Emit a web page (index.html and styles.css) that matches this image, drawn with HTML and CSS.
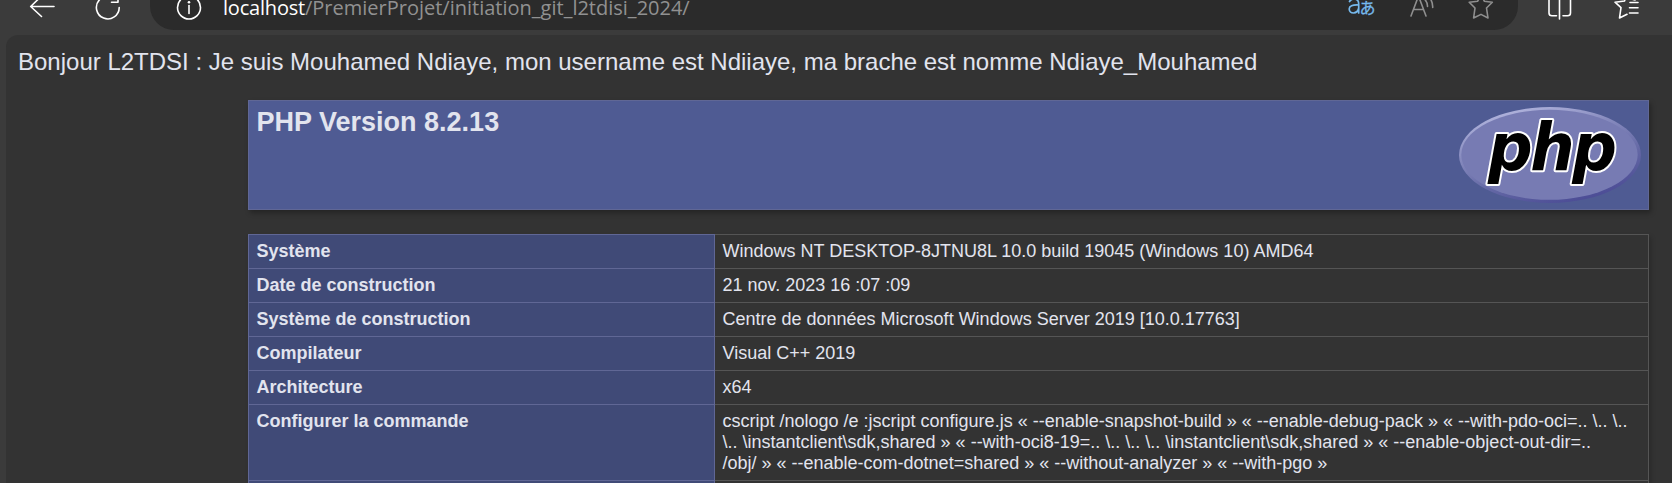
FILE: index.html
```
<!DOCTYPE html>
<html lang="fr">
<head>
<meta charset="utf-8">
<title>PHP 8.2.13 - phpinfo()</title>
<link rel="stylesheet" href="styles.css">
</head>
<body>
<header class="toolbar">
  <svg class="icon nav-icons" width="150" height="30" viewBox="0 0 150 30">
    <path d="M54 6.500H31M41.500-4L30.700 6.500L41.500 16.500"/>
    <path d="M119.200 7.500A11.400 11.400 0 1 1 99.500-0.300M118-7V2.300H111.500"/>
  </svg>
  <div class="address">
    <svg class="icon info" width="26" height="30" viewBox="0 0 26 30">
      <circle cx="13" cy="7.500" r="11.500"/>
      <path d="M13 5.500V13.500"/>
      <circle class="dot" cx="13" cy="2.300" r="1.300"/>
    </svg>
    <div class="url"><span class="host">localhost</span><span class="path">/PremierProjet/initiation_git_l2tdisi_2024/</span></div>
    <svg class="icon address-icons" width="170" height="30" viewBox="0 0 170 30">
      <g class="translate">
        <path d="M1.500 1.500Q3-1 6-1Q10.700-1 10.700 4V13M10.700 5Q1.200 4.500 1.200 9Q1.500 13 5.500 13Q10 12.500 10.700 8"/>
        <text class="kana" x="11.500" y="13.500">あ</text>
      </g>
      <g class="muted">
        <path d="M63 16L70.500-4L78 16M65.500 9.500H75.500"/>
        <path d="M76.500-1Q79.700 2.500 79.500 6.500M80.500-4Q85 1.500 84.700 7.500"/>
        <path d="M133-6L136.300 1.200L144.300 2.300L138.500 8L140 18L133 14.400L125.600 18L127 8L121.200 2.300L129.700 1.200Z"/>
      </g>
    </svg>
  </div>
  <svg class="icon side-icons" width="154" height="30" viewBox="0 0 154 30">
    <path d="M41-8H34Q31 -8 31-5V13Q31 15.800 34 15.800H38.500M44-8H49.500Q52.500-8 52.500-5V13Q52.500 15.800 49.500 15.800H45M41.500-10V19"/>
    <path d="M117 0L113.500-1L109.500-8L106.500 1L97 2.200L103 7.700L101.500 18L109 14.300M112 2.500H120M111.500 7.800H120M111.500 13H120" />
  </svg>
</header>
<main class="page">
  <p class="greeting">Bonjour L2TDSI : Je suis Mouhamed Ndiaye, mon username est Ndiiaye, ma brache est nomme Ndiaye_Mouhamed</p>
  <section class="banner">
    <h1>PHP Version 8.2.13</h1>
    <svg class="logo" width="182" height="96" viewBox="0 0 182 96" role="img" aria-label="PHP">
      <defs>
        <linearGradient id="rim" x1="0.25" y1="0" x2="0.75" y2="1">
          <stop offset="0" stop-color="#b4b7df"/>
          <stop offset="0.35" stop-color="#8589bd"/>
          <stop offset="0.65" stop-color="#6468a5"/>
          <stop offset="1" stop-color="#484893"/>
        </linearGradient>
      </defs>
      <ellipse cx="91" cy="48" rx="91" ry="48" fill="url(#rim)"/>
      <ellipse cx="90.500" cy="47.800" rx="88.200" ry="45" fill="#777bb3"/>
      <text class="wordmark" transform="translate(29 63) scale(0.96 1)">php</text>
    </svg>
  </section>
  <table class="info-table">
    <tr><th>Système</th><td>Windows NT DESKTOP-8JTNU8L 10.0 build 19045 (Windows 10) AMD64</td></tr>
    <tr><th>Date de construction</th><td>21 nov. 2023 16 :07 :09</td></tr>
    <tr><th>Système de construction</th><td>Centre de données Microsoft Windows Server 2019 [10.0.17763]</td></tr>
    <tr><th>Compilateur</th><td>Visual C++ 2019</td></tr>
    <tr><th>Architecture</th><td>x64</td></tr>
    <tr><th>Configurer la commande</th><td>cscript /nologo /e :jscript configure.js « --enable-snapshot-build » « --enable-debug-pack » « --with-pdo-oci=.. \.. \..<br>\.. \instantclient\sdk,shared » « --with-oci8-19=.. \.. \.. \.. \instantclient\sdk,shared » « --enable-object-out-dir=..<br>/obj/ » « --enable-com-dotnet=shared » « --without-analyzer » « --with-pgo »</td></tr>
    <tr><th>&nbsp;</th><td></td></tr>
  </table>
</main>
</body>
</html>
```
FILE: styles.css
```
* { box-sizing: border-box; }

body {
  margin: 0;
  height: 483px;
  overflow: hidden;
  background: #3b3b3b;
  color: #e2e4ee;
  font-family: "Liberation Sans", Arial, sans-serif;
}

.toolbar {
  display: flex;
  height: 35px;
}

.icon {
  flex: none;
  fill: none;
  stroke: #fff;
  stroke-width: 1.6;
  stroke-linecap: round;
  stroke-linejoin: round;
}

.icon .dot { fill: #fff; stroke: none; }
.icon .translate { stroke: #76b9ed; stroke-width: 1.7; }
.icon .kana {
  font: 16px "Noto Sans CJK JP", sans-serif;
  fill: #76b9ed;
  stroke-width: 0.3;
}
.icon .muted { stroke: #8f8f8f; }

.address {
  display: flex;
  width: 1368px;
  height: 30px;
  border-radius: 0 0 24px 24px;
  background: #2b2b2b;
}

.info { margin-left: 26px; }

.url {
  flex: 1;
  margin-left: 21px;
  margin-top: -6px;
  font: 20px/28px "Open Sans", "Noto Sans", sans-serif;
  white-space: nowrap;
}

.host { color: #fff; letter-spacing: -0.2px; }
.path { color: #919191; letter-spacing: 0; }

.page {
  height: 448px;
  margin-left: 6px;
  padding: 12px 0 0 12px;
  overflow: hidden;
  border-radius: 12px 0 0 0;
  background: #333;
}

.greeting {
  margin: 0;
  font-size: 24px;
  line-height: 29px;
}

.banner {
  display: flex;
  justify-content: space-between;
  width: 1401px;
  height: 110px;
  margin: 24px 0 24px 230px;
  padding: 6px 7px 6px 7.5px;
  border: 1px solid #606795;
  background: #4f5b93;
  box-shadow: 2px 3px 5px rgba(0, 0, 0, .3);
}

.banner h1 {
  margin: 0;
  font-size: 27px;
  line-height: 30px;
}

.wordmark {
  font: italic bold 65px "DejaVu Sans", sans-serif;
  letter-spacing: -2.5px;
  fill: #000;
  stroke: #fff;
  stroke-width: 4px;
  stroke-linejoin: round;
  paint-order: stroke;
}

.info-table {
  width: 1401px;
  margin-left: 230px;
  border-collapse: collapse;
  table-layout: fixed;
  font-size: 18px;
  line-height: 21px;
  box-shadow: 2px 3px 5px rgba(0, 0, 0, .2);
}

.info-table th,
.info-table td {
  padding: 6px 7.5px;
  border: 1px solid #555;
  text-align: left;
  vertical-align: top;
}

.info-table th {
  width: 466px;
  border-color: #606795;
  background: #404a77;
}
```
